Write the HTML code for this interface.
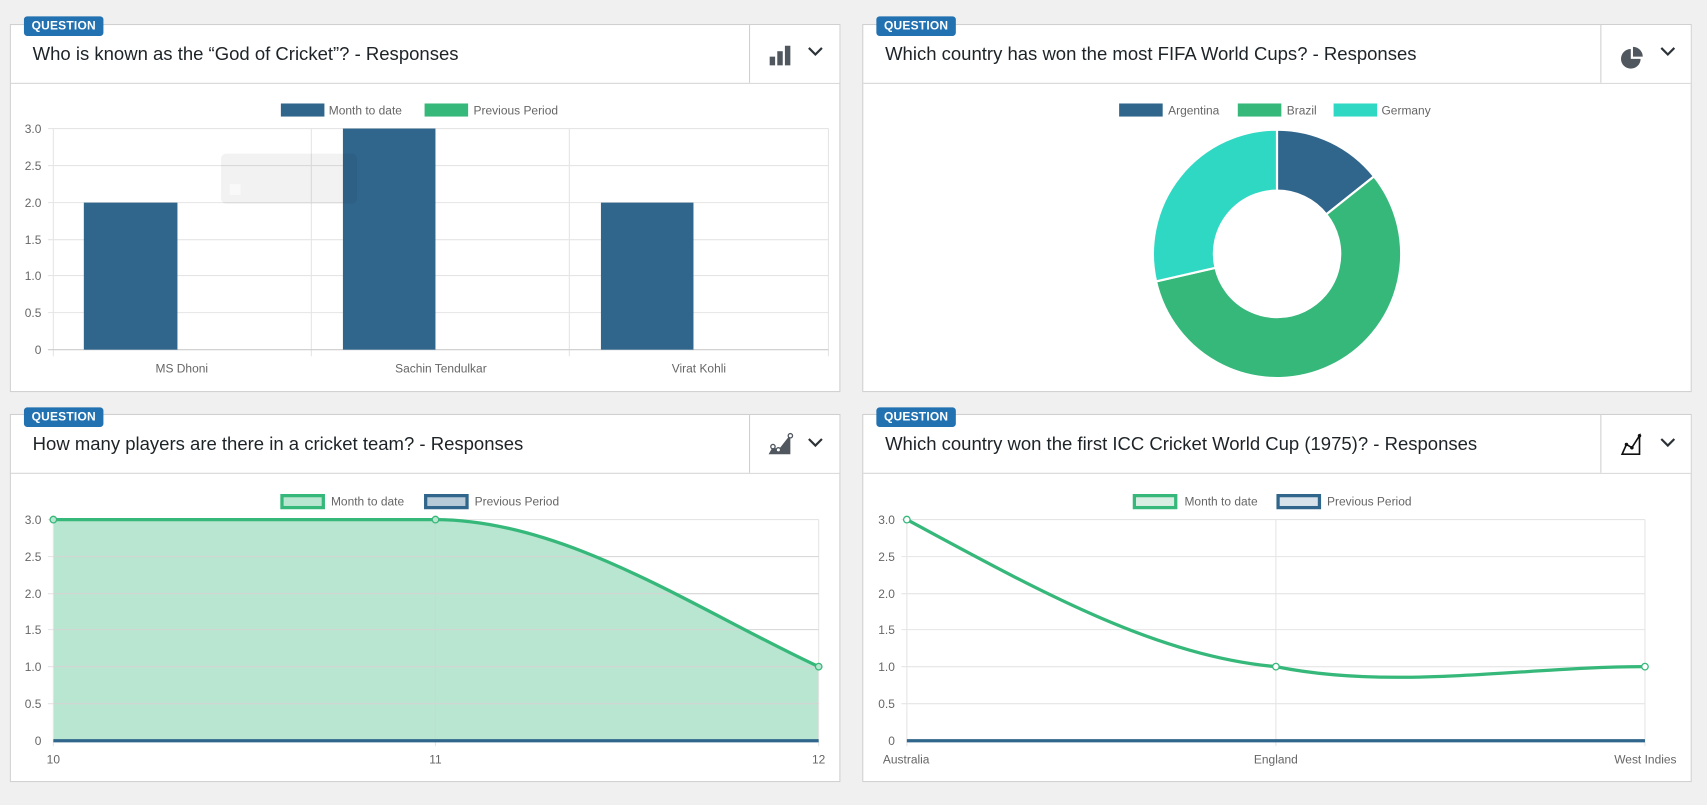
<!DOCTYPE html>
<html><head><meta charset="utf-8"><style>
html,body{margin:0;padding:0;background:#f0f0f0;overflow:hidden;width:1707px;height:805px}
#w{position:absolute;left:0;top:0;width:1568px;height:739px;transform:scale(1.08865,1.0893);transform-origin:0 0;font-family:"Liberation Sans",sans-serif}
.card{position:absolute;background:#fff;border:1px solid #d0d0d0;box-sizing:border-box}
.hd{position:absolute;left:0;right:0;top:0;height:53px;border-bottom:1px solid #d6d6d6}
.dv{position:absolute;top:0;height:53px;width:82px;right:0;border-left:1px solid #d0d0d0;background:#fff}
.title{position:absolute;left:20px;top:17px;font-size:17px;color:#1d2327;white-space:nowrap}
.badge{position:absolute;background:#2271b1;color:#fff;font-weight:bold;font-size:11px;line-height:18px;padding:0 7px;border-radius:3px;letter-spacing:.2px}
svg text{font-family:"Liberation Sans",sans-serif}
</style></head><body><div id="w">
<div class="card" style="left:9px;top:22px;width:763px;height:338px"><div class="hd"></div><div class="dv"></div><div class="title">Who is known as the “God of Cricket”? - Responses</div></div>
<div class="card" style="left:792px;top:22px;width:762px;height:338px"><div class="hd"></div><div class="dv"></div><div class="title">Which country has won the most FIFA World Cups? - Responses</div></div>
<div class="card" style="left:9px;top:380px;width:763px;height:338px"><div class="hd"></div><div class="dv"></div><div class="title">How many players are there in a cricket team? - Responses</div></div>
<div class="card" style="left:792px;top:380px;width:762px;height:338px"><div class="hd"></div><div class="dv"></div><div class="title">Which country won the first ICC Cricket World Cup (1975)? - Responses</div></div>
<div class="badge" style="left:22px;top:15px">QUESTION</div>
<div class="badge" style="left:805px;top:15px">QUESTION</div>
<div class="badge" style="left:22px;top:374px">QUESTION</div>
<div class="badge" style="left:805px;top:374px">QUESTION</div>
<svg width="1568" height="739" style="position:absolute;left:0;top:0" font-size="11" fill="#666">
<!-- header icons -->
<g fill="#50575e"><rect x="707" y="52" width="5" height="8"/><rect x="714" y="47" width="5" height="13"/><rect x="721" y="42" width="5" height="18"/></g>
<g fill="none" stroke="#2c3338" stroke-width="2"><path d="M743 44 L749 50 L755 44"/><path d="M1526 44 L1532 50 L1538 44"/><path d="M743 403 L749 409 L755 403"/><path d="M1526 403 L1532 409 L1538 403"/></g>
<path d="M1498 45 A9 9 0 1 0 1507 54 L1498 54 Z" fill="#50575e"/><path d="M1500 43 A9 9 0 0 1 1509 52 L1500 52 Z" fill="#50575e"/>
<path d="M706 417 L710 410 L715 413 L726 399 L726 417 Z" fill="#50575e"/><g fill="#fff" stroke="#50575e" stroke-width="1.2"><circle cx="710" cy="410" r="2"/><circle cx="715" cy="413" r="2"/><circle cx="726" cy="400" r="2"/></g>
<path d="M1490 417 L1494 408 L1499 411 L1506 400 L1506 417 Z" fill="none" stroke="#111" stroke-width="1.5"/><g fill="#111"><circle cx="1494" cy="408" r="1.6"/><circle cx="1499" cy="411" r="1.6"/><circle cx="1506" cy="400" r="1.6"/></g>
<!-- chart1 -->
<rect x="258" y="95" width="40" height="12" fill="#30668c"/><text x="302" y="105">Month to date</text>
<rect x="390" y="95" width="40" height="12" fill="#36b87a"/><text x="435" y="105">Previous Period</text>
<g stroke="#e5e5e5" stroke-width="1">
<path d="M44 118H761M44 152H761M44 186H761M44 220H761M44 253H761M44 287H761M49 327V118M286 327V118M523 327V118M761 327V118"/></g>
<path d="M44 321H761" stroke="#ccc"/>
<g text-anchor="end"><text x="38" y="122">3.0</text><text x="38" y="156">2.5</text><text x="38" y="190">2.0</text><text x="38" y="224">1.5</text><text x="38" y="257">1.0</text><text x="38" y="291">0.5</text><text x="38" y="325">0</text></g>
<g fill="#30668c"><rect x="77" y="186" width="86" height="135"/><rect x="315" y="118" width="85" height="203"/><rect x="552" y="186" width="85" height="135"/></g>
<rect x="203" y="141" width="125" height="46" rx="5" fill="#000" opacity="0.05"/><rect x="211" y="169" width="10" height="10" fill="#fff" opacity="0.5"/>
<g text-anchor="middle"><text x="167" y="342">MS Dhoni</text><text x="405" y="342">Sachin Tendulkar</text><text x="642" y="342">Virat Kohli</text></g>
<!-- chart2 -->
<rect x="1028" y="95" width="40" height="12" fill="#30668c"/><text x="1073" y="105">Argentina</text>
<rect x="1137" y="95" width="40" height="12" fill="#36b87a"/><text x="1182" y="105">Brazil</text>
<rect x="1225" y="95" width="40" height="12" fill="#2fd8c3"/><text x="1269" y="105">Germany</text>
<g stroke="#fff" stroke-width="2">
<path d="M1173 119 A114 114 0 0 1 1262.1 161.9 L1218.3 196.8 A58 58 0 0 0 1173 175 Z" fill="#30668c"/>
<path d="M1262.1 161.9 A114 114 0 1 1 1061.9 258.4 L1116.5 245.9 A58 58 0 1 0 1218.3 196.8 Z" fill="#36b87a"/>
<path d="M1061.9 258.4 A114 114 0 0 1 1173 119 L1173 175 A58 58 0 0 0 1116.5 245.9 Z" fill="#2fd8c3"/></g>
<!-- chart3 -->
<rect x="259" y="455" width="38" height="11" fill="#b8e6d0" stroke="#36b87a" stroke-width="3"/><text x="304" y="464">Month to date</text>
<rect x="391" y="455" width="38" height="11" fill="#b7cad8" stroke="#30668c" stroke-width="3"/><text x="436" y="464">Previous Period</text>
<path d="M49 477 L400 477 C520 477 640 560 752 612 L752 680 L49 680 Z" fill="#b8e6d0"/>
<g stroke="#e5e5e5" fill="none"><path d="M44 477H752M44 511H752M44 545H752M44 578H752M44 612H752M44 646H752M49 685V477M400 685V477M752 685V477"/></g>
<g stroke="#000" stroke-opacity="0.07"><path d="M49 511H752M49 545H752M49 578H752M49 612H752M49 646H752M400 477V680"/></g>
<g text-anchor="end"><text x="38" y="481">3.0</text><text x="38" y="515">2.5</text><text x="38" y="549">2.0</text><text x="38" y="582">1.5</text><text x="38" y="616">1.0</text><text x="38" y="650">0.5</text><text x="38" y="684">0</text></g>
<path d="M49 680H752" stroke="#30668c" stroke-width="3"/>
<path d="M49 477 L400 477 C520 477 640 560 752 612" fill="none" stroke="#36b87a" stroke-width="3"/>
<g fill="#b8e6d0" stroke="#36b87a" stroke-width="1.2"><circle cx="49" cy="477" r="3"/><circle cx="400" cy="477" r="3"/><circle cx="752" cy="612" r="3"/></g>
<g text-anchor="middle"><text x="49" y="701">10</text><text x="400" y="701">11</text><text x="752" y="701">12</text></g>
<!-- chart4 -->
<rect x="1042" y="455" width="38" height="11" fill="#d8eee2" stroke="#36b87a" stroke-width="3"/><text x="1088" y="464">Month to date</text>
<rect x="1174" y="455" width="38" height="11" fill="#d8e2ea" stroke="#30668c" stroke-width="3"/><text x="1219" y="464">Previous Period</text>
<g stroke="#e5e5e5" fill="none"><path d="M828 477H1511M828 511H1511M828 545H1511M828 578H1511M828 612H1511M828 646H1511M833 685V477M1172 685V477M1511 685V477"/></g>
<g text-anchor="end"><text x="822" y="481">3.0</text><text x="822" y="515">2.5</text><text x="822" y="549">2.0</text><text x="822" y="582">1.5</text><text x="822" y="616">1.0</text><text x="822" y="650">0.5</text><text x="822" y="684">0</text></g>
<path d="M833 680H1511" stroke="#30668c" stroke-width="3"/>
<path d="M833 477 C950 540 1060 602 1172 612 C1280 634 1400 612 1511 612" fill="none" stroke="#36b87a" stroke-width="3"/>
<g fill="#fff" stroke="#36b87a" stroke-width="1.2"><circle cx="833" cy="477" r="3"/><circle cx="1172" cy="612" r="3"/><circle cx="1511" cy="612" r="3"/></g>
<text x="811" y="701">Australia</text><text x="1172" y="701" text-anchor="middle">England</text><text x="1540" y="701" text-anchor="end">West Indies</text>
</svg>
</div></body></html>
